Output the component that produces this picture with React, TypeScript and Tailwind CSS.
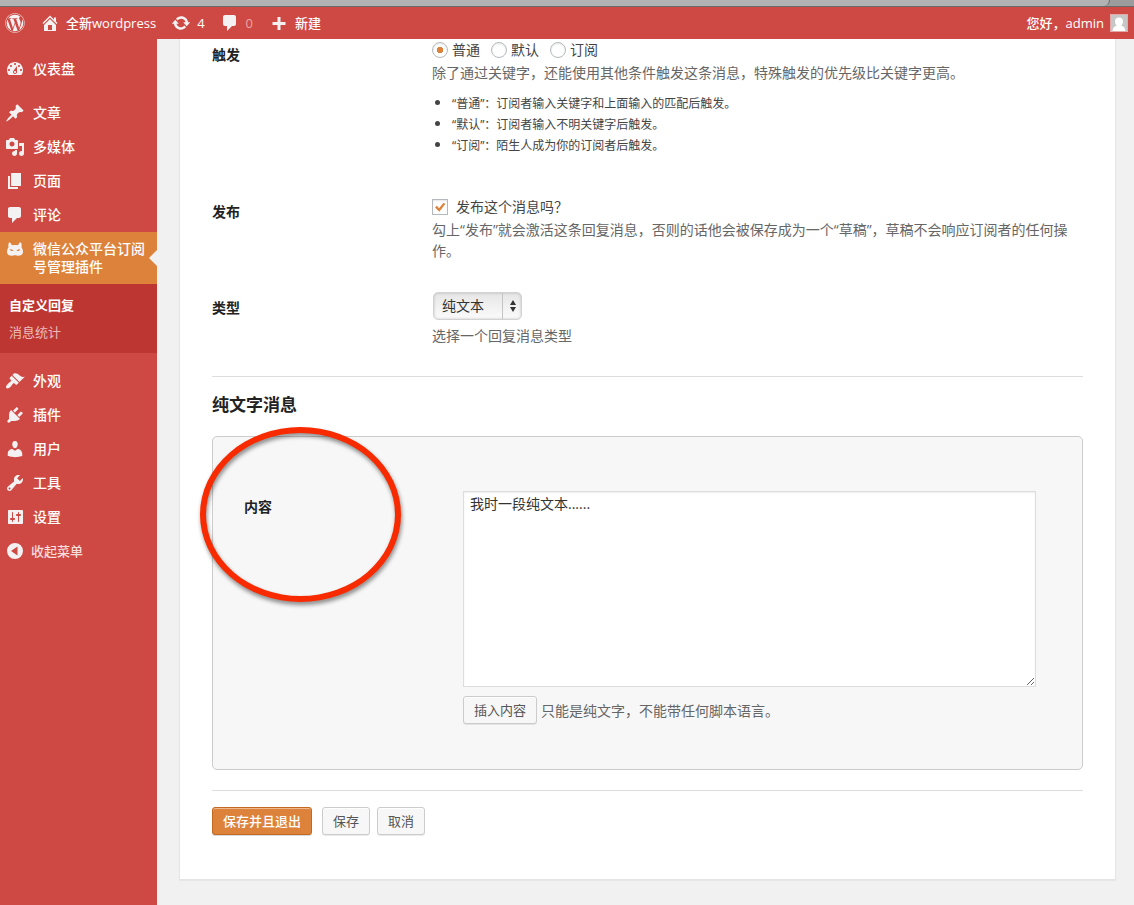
import { useState, type ReactNode } from "react";
import { FaWordpress } from "react-icons/fa";

const paths = {
  home: "M16 8.5l1.53 1.53-1.06 1.06L10 4.6l-6.47 6.49-1.06-1.06L10 2.5l4 4v-2h2v4zm-6-2.46l6 5.99V18H4v-5.97zM12 17v-5H8v5h4z",
  update:
    "M10.2 3.28c3.53 0 6.43 2.61 6.92 6h2.08l-3.5 4-3.5-4h2.32c-.45-1.97-2.21-3.45-4.32-3.45-1.45 0-2.73.71-3.54 1.78L4.95 5.66C6.23 4.2 8.11 3.28 10.2 3.28zm-.4 13.44c-3.52 0-6.43-2.61-6.92-6H.8l3.5-4c1.17 1.33 2.33 2.67 3.5 4H5.48c.45 1.97 2.21 3.45 4.32 3.45 1.45 0 2.73-.71 3.54-1.78l1.71 1.95c-1.28 1.46-3.15 2.38-5.25 2.38z",
  comments: "M5 2h9c1.1 0 2 .9 2 2v7c0 1.1-.9 2-2 2h-2l-5 5v-5H5c-1.1 0-2-.9-2-2V4c0-1.1.9-2 2-2z",
  plus: "M8.5 4h3v5h5v3h-5v5h-3v-5h-5V9h5z",
  dashboard:
    "M3.76 16h12.48c1.1-1.37 1.76-3.11 1.76-5 0-4.42-3.58-8-8-8s-8 3.58-8 8c0 1.89.66 3.63 1.76 5zM10 4c.55 0 1 .45 1 1s-.45 1-1 1-1-.45-1-1 .45-1 1-1zM6 6c.55 0 1 .45 1 1s-.45 1-1 1-1-.45-1-1 .45-1 1-1zm8 0c.55 0 1 .45 1 1s-.45 1-1 1-1-.45-1-1 .45-1 1-1zm-5.37 5.55L12 7v6c0 1.1-.9 2-2 2s-2-.9-2-2c0-.57.24-1.08.63-1.45zM4 10c.55 0 1 .45 1 1s-.45 1-1 1-1-.45-1-1 .45-1 1-1zm12 0c.55 0 1 .45 1 1s-.45 1-1 1-1-.45-1-1 .45-1 1-1zm-5 3c0-.55-.45-1-1-1s-1 .45-1 1 .45 1 1 1 1-.45 1-1z",
  post: "M10.44 3.02l1.82-1.82 6.36 6.35-1.83 1.82c-1.05-.68-2.48-.57-3.41.36l-.75.75c-.92.93-1.04 2.35-.35 3.41l-1.83 1.82-2.41-2.41-2.8 2.79c-.42.42-3.38 2.71-3.8 2.29s1.86-3.39 2.28-3.81l2.79-2.79L4.1 9.36l1.83-1.82c1.05.69 2.48.57 3.4-.36l.75-.75c.93-.92 1.05-2.35.36-3.41z",
  media:
    "M13 11V4c0-.55-.45-1-1-1h-1.67L9 1H5L3.67 3H2c-.55 0-1 .45-1 1v7c0 .55.45 1 1 1h10c.55 0 1-.45 1-1zM7 4.5c1.38 0 2.5 1.12 2.5 2.5S8.38 9.5 7 9.5 4.5 8.38 4.5 7 5.62 4.5 7 4.5zM14 6h5v10.5c0 1.38-1.12 2.5-2.5 2.5S14 17.88 14 16.5s1.12-2.5 2.5-2.5c.17 0 .34.02.5.05V9h-3V6zm-4 8.05V13h2v3.5c0 1.38-1.12 2.5-2.5 2.5S7 17.88 7 16.5 8.12 14 9.5 14c.17 0 .34.02.5.05z",
  page: "M6 15V2h10v13H6zm-1 1h8v2H3V5h2v11z",
  mascot:
    "M4.300 2.300C5.300 2.600 6.300 3.700 6.900 5.200C8.800 4.800 11.200 4.800 13.100 5.200C13.700 3.700 14.700 2.600 15.700 2.300C16.700 3.600 16.900 5.600 16.500 7.300C17.600 8.700 18.100 10.600 18 12.300C17.800 14.500 16 15.700 13.700 15.700C12 15.700 11.400 15.200 10 15.200C8.600 15.200 8 15.700 6.300 15.700C4 15.700 2.200 14.500 2 12.300C1.900 10.600 2.400 8.700 3.500 7.300C3.100 5.600 3.300 3.600 4.300 2.300zM4.900 8.900C5.300 10.600 6.900 11.400 8.700 11C8.100 10 6.600 9.200 4.900 8.900zM15.100 8.900C13.400 9.200 11.900 10 11.300 11C13.100 11.400 14.700 10.600 15.100 8.900z",
  appearance:
    "M14.48 11.06L7.41 3.99l1.5-1.5c.5-.56 2.3-.47 3.51.32 1.21.8 1.43 1.28 2.91 2.1 1.18.64 2.45 1.26 4.45.85zm-.71.71L6.7 4.7 4.93 6.47c-.39.39-.39 1.02 0 1.41l1.06 1.06c.39.39.39 1.03 0 1.42-.6.6-1.43 1.11-2.21 1.69-.35.26-.7.53-1.01.84C1.43 14.23.4 16.08 1.4 17.07c.99 1 2.84-.03 4.18-1.36.31-.31.58-.66.85-1.02.57-.78 1.08-1.61 1.69-2.21.39-.39 1.02-.39 1.41 0l1.06 1.06c.39.39 1.02.39 1.41 0z",
  plugins:
    "M13.11 4.36L9.87 7.6 8 5.73l3.24-3.24c.35-.34 1.05-.2 1.56.32.52.51.66 1.21.31 1.55zm-8 1.77l.91-1.12 9.01 9.01-1.19.84c-.71.71-2.63 1.16-3.82 1.16H6.14L4.9 17.26c-.59.59-1.54.59-2.12 0-.59-.58-.59-1.53 0-2.12l1.24-1.24v-3.88c0-1.13.4-3.19 1.09-3.89zm7.26 3.97l3.24-3.24c.34-.35 1.04-.21 1.55.31.52.51.66 1.21.31 1.55l-3.24 3.25z",
  users:
    "M10 9.25c-2.27 0-2.73-3.44-2.73-3.44C7 4.02 7.82 2 9.97 2c2.16 0 2.98 2.02 2.71 3.81 0 0-.41 3.44-2.68 3.44zm0 2.57L12.72 10c2.39 0 4.52 2.33 4.52 4.53v2.49s-3.65 1.13-7.24 1.13c-3.65 0-7.24-1.13-7.24-1.13v-2.49c0-2.25 1.94-4.48 4.47-4.48z",
  tools:
    "M16.68 9.77c-1.34 1.34-3.3 1.67-4.95.99l-5.41 6.52c-.99.99-2.59.99-3.58 0s-.99-2.59 0-3.57l6.52-5.42c-.68-1.65-.35-3.61.99-4.95 1.28-1.28 3.12-1.62 4.72-1.06l-2.89 2.89 2.82 2.82 2.86-2.87c.53 1.58.18 3.39-1.08 4.65zM3.81 16.21c.4.39 1.04.39 1.43 0 .4-.4.4-1.04 0-1.43-.39-.4-1.03-.4-1.43 0-.39.39-.39 1.03 0 1.43z",
  settings:
    "M18 16V4c0-.55-.45-1-1-1H4c-.55 0-1 .45-1 1v12c0 .55.45 1 1 1h13c.55 0 1-.45 1-1zM8 11h1c.55 0 1 .45 1 1s-.45 1-1 1H8v1.500c0 .28-.22.5-.5.5s-.5-.22-.5-.5V13H6c-.55 0-1-.45-1-1s.45-1 1-1h1V5.500c0-.28.22-.5.5-.5s.5.22.5.5V11zm5-2h-1c-.55 0-1-.45-1-1s.45-1 1-1h1V5.500c0-.28.22-.5.5-.5s.5.22.5.5V7h1c.55 0 1 .45 1 1s-.45 1-1 1h-1v5.500c0 .28-.22.5-.5.5s-.5-.22-.5-.5V9z",
  collapse: "M10 2a8 8 0 1 0 0 16a8 8 0 0 0 0-16zM12.500 5.500v9L6 10z",
};

type IconName = keyof typeof paths;

function Icon({ name }: { name: IconName }) {
  return (
    <svg viewBox="0 0 20 20" className="size-5 shrink-0 fill-[#f3f1f1]" fillRule="evenodd" aria-hidden="true">
      <path d={paths[name]} />
    </svg>
  );
}

function BarLink({ icon, children }: { icon: IconName; children: ReactNode }) {
  return (
    <a href="#" className="flex items-center gap-1.5">
      <Icon name={icon} />
      {children}
    </a>
  );
}

function MenuItem({ icon, children }: { icon: IconName; children: ReactNode }) {
  return (
    <li>
      <a href="#" className="flex h-[34px] items-center gap-2 pl-[5px] text-sm leading-[22px] font-medium">
        <Icon name={icon} />
        {children}
      </a>
    </li>
  );
}

const buttonBase = "h-7 rounded-[3px] border px-2.5 text-[13px] leading-[26px]";
const plainButton = `${buttonBase} border-[#ccc] bg-[#f7f7f7] text-[#555] shadow-[inset_0_1px_0_#fff,0_1px_0_rgba(0,0,0,.08)]`;

function Radio({ label, checked, onPick }: { label: string; checked: boolean; onPick: () => void }) {
  return (
    <label className="flex items-center gap-1">
      <input
        type="radio"
        name="trigger"
        checked={checked}
        onChange={onPick}
        className="size-4 appearance-none rounded-full border border-[#b4b9be] bg-white shadow-[inset_0_1px_2px_rgba(0,0,0,.1)] checked:bg-[radial-gradient(circle,#dd823b_0_3px,#fff_3.5px)]"
      />
      {label}
    </label>
  );
}

export default function App() {
  const [trigger, setTrigger] = useState("普通");
  const [published, setPublished] = useState(true);

  return (
    <div className="flex min-h-screen flex-col bg-[#f1f1f1] font-['Open_Sans','Noto_Sans_CJK_SC',sans-serif] text-sm leading-[21px] text-[#444]">
      <div className="flex h-[7px] border-b border-[#6b6b6b] bg-[#9c9c9c]">
        <div className="mr-6 flex-1 rounded-br-md border-r border-[#666] bg-[#b2b2b2]" />
      </div>

      <header className="flex h-8 items-center bg-[#cf4944] pr-1.5 pl-[5px] text-[13px] font-medium text-white">
        <nav className="flex items-center gap-[15px]">
          <a href="#" aria-label="WordPress">
            <FaWordpress className="size-5 text-[#f3f1f1]" />
          </a>
          <BarLink icon="home">全新wordpress</BarLink>
          <BarLink icon="update">4</BarLink>
          <BarLink icon="comments">
            <span className="pr-px font-normal text-[#e9a6a3]">0</span>
          </BarLink>
          <BarLink icon="plus">新建</BarLink>
        </nav>
        <a href="#" className="ml-auto flex items-center gap-1.5">
          您好，admin
          <svg viewBox="0 0 18 18" className="size-[18px]" aria-hidden="true">
            <rect width="18" height="18" fill="#e1a9a7" />
            <rect x="1" y="1" width="16" height="16" fill="#c6c6c6" />
            <path fill="#fff" d="M9 3.500a4 4 0 0 1 4 4c0 1.900-.8 3.300-1.800 4c2.500.6 4 2.400 4.300 5.500H2.500c.3-3.100 1.800-4.900 4.300-5.500C5.800 10.800 5 9.400 5 7.500a4 4 0 0 1 4-4z" />
          </svg>
        </a>
      </header>

      <div className="flex flex-1">
        <aside className="w-[157px] shrink-0 bg-[#cf4944] pt-[13px] text-white">
          <ul>
            <MenuItem icon="dashboard">仪表盘</MenuItem>
          </ul>
          <ul className="mt-2.5">
            <MenuItem icon="post">文章</MenuItem>
            <MenuItem icon="media">多媒体</MenuItem>
            <MenuItem icon="page">页面</MenuItem>
            <MenuItem icon="comments">评论</MenuItem>
            <li>
              <a href="#" className="relative flex gap-2 bg-[#dd823b] py-2 pr-2 pl-[5px] text-sm leading-[18px] font-medium">
                <Icon name="mascot" />
                微信公众平台订阅号管理插件
                <span className="absolute top-[18px] right-0 border-y-8 border-r-8 border-y-transparent border-r-[#f1f1f1]" />
              </a>
              <ul className="bg-[#be3631] px-[9px] pt-2 pb-[7px] text-[13px] leading-[27px]">
                <li>
                  <a href="#" className="font-bold">自定义回复</a>
                </li>
                <li>
                  <a href="#" className="text-[#ebbdbb]">消息统计</a>
                </li>
              </ul>
            </li>
          </ul>
          <ul className="mt-[11px]">
            <MenuItem icon="appearance">外观</MenuItem>
            <MenuItem icon="plugins">插件</MenuItem>
            <MenuItem icon="users">用户</MenuItem>
            <MenuItem icon="tools">工具</MenuItem>
            <MenuItem icon="settings">设置</MenuItem>
          </ul>
          <button type="button" className="flex h-[34px] items-center gap-1.5 pl-[5px] text-[13px] font-medium text-[#f6dedd]">
            <Icon name="collapse" />
            收起菜单
          </button>
        </aside>

        <main className="min-w-0 flex-1 pr-[18px] pl-[22px]">
          <form
            className="border border-t-0 border-[#e5e5e5] bg-white px-8 pb-11 shadow-[0_1px_1px_rgba(0,0,0,.04)]"
            onSubmit={(e) => e.preventDefault()}
          >
            <div className="grid grid-cols-[220px_1fr]">
              <div id="trigger-label" className="pt-[5px] font-bold text-[#222]">触发</div>
              <div>
                <div role="radiogroup" aria-labelledby="trigger-label" className="flex gap-[11px]">
                  {["普通", "默认", "订阅"].map((name) => (
                    <Radio key={name} label={name} checked={trigger === name} onPick={() => setTrigger(name)} />
                  ))}
                </div>
                <p className="mt-0.5 text-[#666]">除了通过关键字，还能使用其他条件触发这条消息，特殊触发的优先级比关键字更高。</p>
                <ul className="mt-[9px] list-disc pl-5 text-xs leading-[21px] marker:text-[14px]">
                  <li className="h-[21px]">“普通”：订阅者输入关键字和上面输入的匹配后触发。</li>
                  <li className="h-[21px]">“默认”：订阅者输入不明关键字后触发。</li>
                  <li className="h-[21px]">“订阅”：陌生人成为你的订阅者后触发。</li>
                </ul>
              </div>
            </div>

            <div className="mt-[41px] grid grid-cols-[220px_1fr]">
              <div className="pt-[5px] font-bold text-[#222]">发布</div>
              <div>
                <label className="flex items-center gap-2">
                  <span className="relative flex size-4">
                    <input
                      type="checkbox"
                      checked={published}
                      onChange={(e) => setPublished(e.target.checked)}
                      className="size-4 appearance-none border border-[#b4b9be] bg-white shadow-[inset_0_1px_2px_rgba(0,0,0,.1)]"
                    />
                    {published && (
                      <svg viewBox="0 0 16 16" className="pointer-events-none absolute inset-0" aria-hidden="true">
                        <path d="M3 8.500L5 6.800L7 9.300L11.500 3.800L13.300 5L7.300 12.800z" fill="#dd823b" />
                      </svg>
                    )}
                  </span>
                  发布这个消息吗？
                </label>
                <p className="mt-0.5 pr-3 text-[#666]">
                  勾上“发布”就会激活这条回复消息，否则的话他会被保存成为一个“草稿”，草稿不会响应订阅者的任何操作。
                </p>
              </div>
            </div>

            <div className="mt-[31px] grid grid-cols-[220px_1fr]">
              <label htmlFor="type" className="pt-[5px] font-bold text-[#222]">类型</label>
              <div>
                <div className="relative ml-px flex w-[89px]">
                  <select
                    id="type"
                    className="h-7 w-full appearance-none rounded-[5px] border border-[#d2d2d2] bg-linear-to-b from-[#e6e6e6] to-[#fbfbfb] pl-2 text-sm text-[#333] shadow-[inset_0_0_3px_rgba(0,0,0,.2)]"
                  >
                    <option>纯文本</option>
                  </select>
                  <span className="pointer-events-none absolute inset-y-px right-0 flex w-5 items-center justify-center border-l border-[#c4c4c4]">
                    <svg viewBox="0 0 8 14" className="h-3.5 w-2 fill-[#333]" aria-hidden="true">
                      <path d="M4 1L7 6H1zM4 13L1 8H7z" />
                    </svg>
                  </span>
                </div>
                <p className="mt-[5px] text-[#666]">选择一个回复消息类型</p>
              </div>
            </div>

            <hr className="mt-[30px] border-[#ddd]" />
            <h2 className="mt-4 text-[17px] leading-[23px] font-bold text-[#222]">纯文字消息</h2>

            <section className="relative mt-5 grid grid-cols-[219px_1fr] rounded-[5px] border border-[#ccc] bg-[#f7f7f7] pt-[54px] pr-[46px] pb-[45px] pl-[31px]">
              <label htmlFor="content" className="pt-[5px] font-bold text-[#222]">内容</label>
              <div>
                <textarea
                  id="content"
                  defaultValue="我时一段纯文本......"
                  className="block h-[196px] w-full resize border border-[#ddd] bg-white px-1.5 py-px text-sm leading-[21px] text-[#333] shadow-[inset_0_1px_2px_rgba(0,0,0,.07)]"
                />
                <div className="mt-[9px] flex items-center gap-1">
                  <button type="button" className={plainButton}>插入内容</button>
                  <span className="text-[#666]">只能是纯文字，不能带任何脚本语言。</span>
                </div>
              </div>
              <span className="pointer-events-none absolute -top-2.5 -left-[13px] h-[175px] w-[201px] rounded-[50%] border-6 border-[#f82a00] drop-shadow-[1px_3px_2px_rgba(0,0,0,.45)]" />
            </section>

            <hr className="mt-5 border-[#ddd]" />
            <div className="mt-4 flex gap-[7px]">
              <button
                type="submit"
                className={`${buttonBase} mr-[3px] border-[#c36922] bg-[#dd823b] font-medium text-white shadow-[inset_0_1px_0_#eeb98f,0_1px_0_rgba(0,0,0,.15)]`}
              >
                保存并且退出
              </button>
              <button type="button" className={plainButton}>保存</button>
              <button type="button" className={plainButton}>取消</button>
            </div>
          </form>
        </main>
      </div>
    </div>
  );
}
